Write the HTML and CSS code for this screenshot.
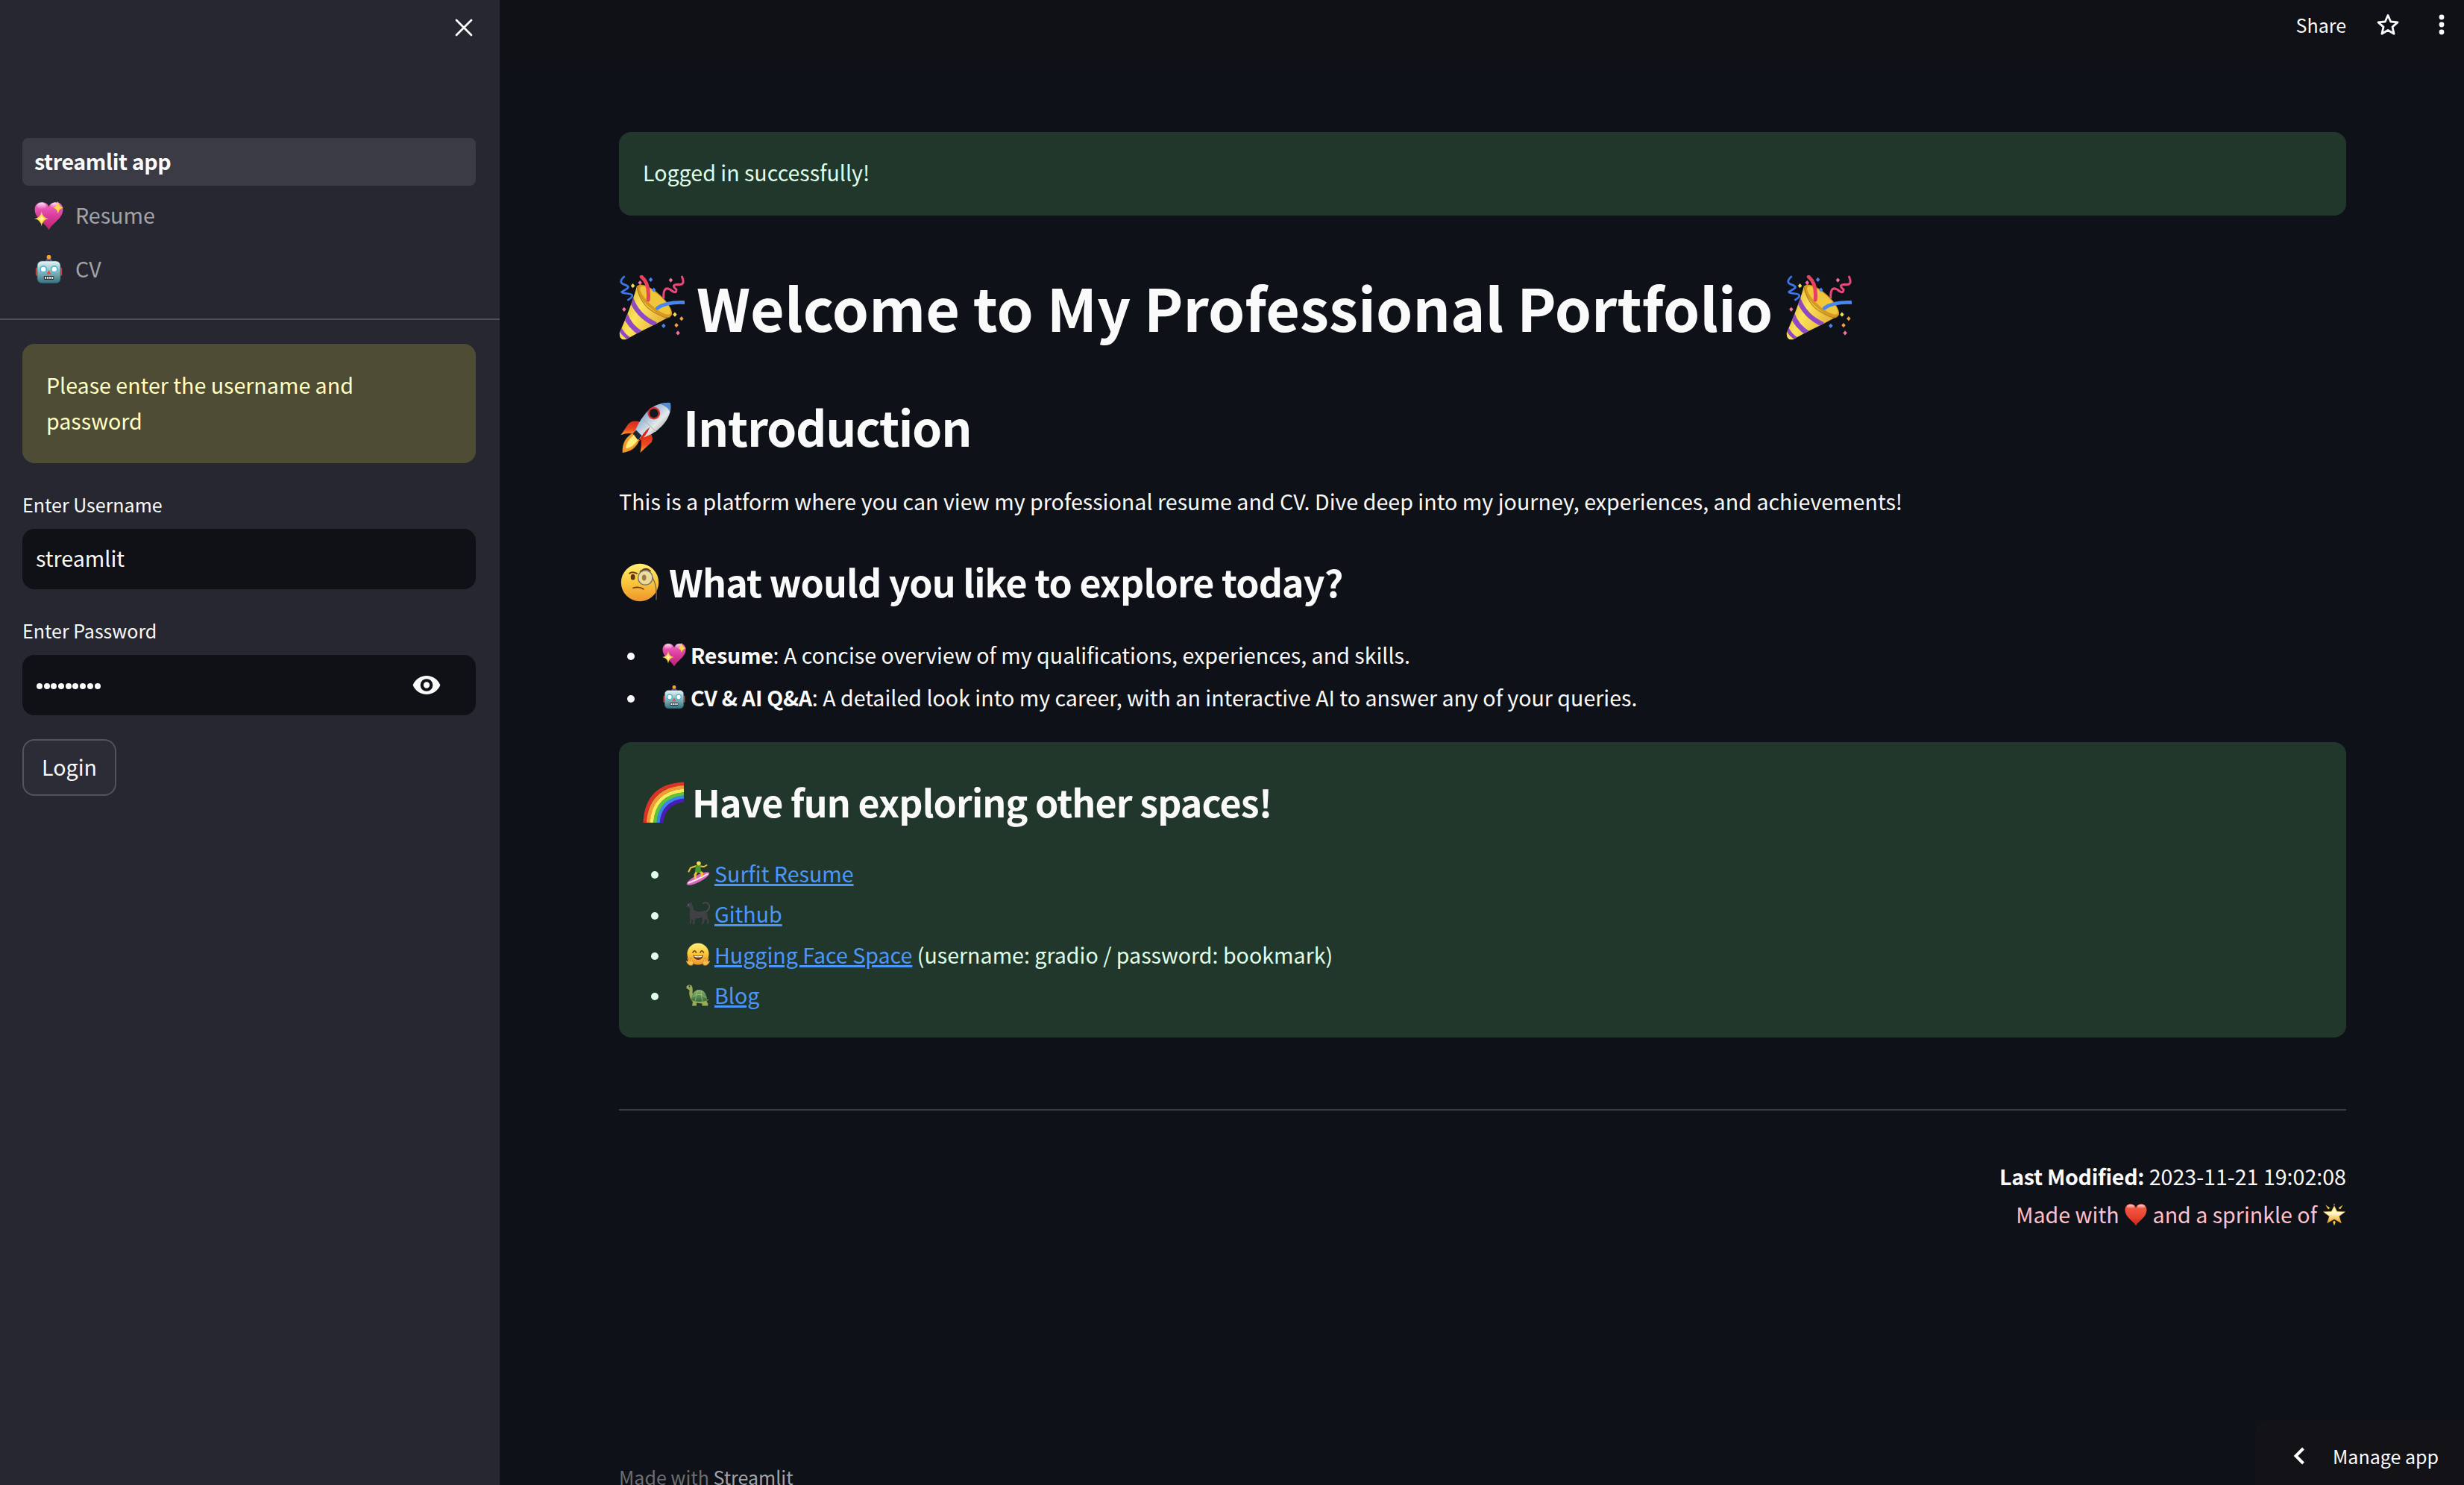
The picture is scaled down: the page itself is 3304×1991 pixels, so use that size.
FILE: index.html
```html
<!DOCTYPE html>
<html lang="en">
<head>
<meta charset="utf-8">
<title>streamlit app</title>
<link rel="stylesheet" href="styles.css">
</head>
<body>
<svg class="sprite" aria-hidden="true">
  <defs>
    <linearGradient id="pink" x1="0" y1="0" x2="0" y2="1"><stop offset="0" stop-color="#f06fc4"/><stop offset=".45" stop-color="#dc3fa0"/><stop offset="1" stop-color="#b8236c"/></linearGradient>
    <linearGradient id="shine" x1="0" y1="0" x2="0" y2="1"><stop offset="0" stop-color="#fff" stop-opacity=".75"/><stop offset="1" stop-color="#fff" stop-opacity="0"/></linearGradient>
    <linearGradient id="teal" x1="0" y1="0" x2="0" y2="1"><stop offset="0" stop-color="#e6f7f6"/><stop offset=".45" stop-color="#8fbcc1"/><stop offset="1" stop-color="#33707f"/></linearGradient>
    <linearGradient id="gold" x1="0" y1="0" x2="1" y2=".5"><stop offset="0" stop-color="#c98f22"/><stop offset=".45" stop-color="#fce45a"/><stop offset="1" stop-color="#d99a2b"/></linearGradient>
    <linearGradient id="face" x1="0" y1="0" x2="0" y2="1"><stop offset="0" stop-color="#fff07a"/><stop offset=".45" stop-color="#fbcb3c"/><stop offset="1" stop-color="#ee942f"/></linearGradient>
    <linearGradient id="steel" x1="0" y1="0" x2="1" y2="1"><stop offset="0" stop-color="#4d7fc0"/><stop offset=".35" stop-color="#9db9d8"/><stop offset=".6" stop-color="#e6e9ea"/><stop offset="1" stop-color="#55595c"/></linearGradient>
    <linearGradient id="fin" x1="0" y1="0" x2="0" y2="1"><stop offset="0" stop-color="#d92817"/><stop offset=".6" stop-color="#ea4a22"/><stop offset="1" stop-color="#f6a62e"/></linearGradient>
    <linearGradient id="red" x1="0" y1="0" x2="0" y2="1"><stop offset="0" stop-color="#f4604a"/><stop offset=".6" stop-color="#e8432f"/><stop offset="1" stop-color="#c42315"/></linearGradient>
    <linearGradient id="star" x1="0" y1="0" x2="0" y2="1"><stop offset="0" stop-color="#ffe96a"/><stop offset=".4" stop-color="#fffbcf"/><stop offset="1" stop-color="#f0a020"/></linearGradient>
    <linearGradient id="shell" x1="0" y1="0" x2="0" y2="1"><stop offset="0" stop-color="#8fb46a"/><stop offset="1" stop-color="#2f6b3a"/></linearGradient>
    <clipPath id="cone"><path d="M17.6 10 C14 24 6 44 .6 56 Q0 64 7 62.500 C22 54 38 47 50 40 Z"/></clipPath>
  </defs>

  <symbol id="party" viewBox="0 0 64 64">
    <g clip-path="url(#cone)">
      <path d="M0 0H64V64H0Z" fill="url(#gold)"/>
      <path d="M12 23 Q18 40 36 48" fill="none" stroke="#8f49c4" stroke-width="4.500"/>
      <path d="M6 38 Q10 50 22 57" fill="none" stroke="#8f49c4" stroke-width="5"/>
      <path d="M1 52 Q4 58 10 62" fill="none" stroke="#8f49c4" stroke-width="3.500"/>
    </g>
    <ellipse cx="34.500" cy="25" rx="22" ry="8" transform="rotate(42 34.500 25)" fill="#d59a22"/>
    <ellipse cx="35.500" cy="24.500" rx="19.500" ry="6" transform="rotate(42 35.500 24.500)" fill="#f0c63a"/>
    <path d="M17.600 10.500 Q20 28 34 36 T50 40" fill="none" stroke="#b87b18" stroke-width=".8"/>
    <g fill="none" stroke-linecap="round">
      <path d="M5 1.500 Q-1 7 5 9 T8 13 T3 16 T9 18 T9 24" stroke="#3d76e8" stroke-width="2"/>
      <path d="M22 1.500 Q30 8 28.500 24" stroke="#e8415f" stroke-width="3.600"/>
      <path d="M61.500 1.500 Q65 10 58 9 Q50 9 56 14 Q56 19 50 14 Q43 10 43.500 22" stroke="#e6487a" stroke-width="2.200"/>
      <path d="M37.500 32 Q46 26 63 26.500" stroke="#4a86f0" stroke-width="3.600"/>
    </g>
    <g fill="#4a86f0"><path d="M31 2l2 2.300-2 2.300-2-2.300zM34 12l2 2.300-2 2.300-2-2.300zM43.500 47l2 2.300-2 2.300-2-2.300z"/></g>
    <g fill="#f7e04c"><path d="M13.500 8l2 2.300-2 2.300-2-2.300zM54.500 36l2 2.300-2 2.300-2-2.300z"/></g>
    <g fill="#f0729e"><path d="M20.500 5l2 2.300-2 2.300-2-2.300zM50.500 2.500l2 2.300-2 2.300-2-2.300zM5 31l2 2.300-2 2.300-2-2.300zM57.500 54l2 2.300-2 2.300-2-2.300z"/></g>
    <g fill="#f0a040"><path d="M61 40l2 2.300-2 2.300-2-2.300zM56 46.500l2 2.300-2 2.300-2-2.300z"/></g>
  </symbol>

  <symbol id="rocket" viewBox="0 0 64 64">
    <path d="M26 25 Q14 21 9 29 L1 41 Q11 37 20 41Z" fill="url(#fin)"/>
    <path d="M38 38 Q43 48 37 52 L25 63 Q27 53 26 46Z" fill="url(#fin)"/>
    <path d="M15 39 Q2 47 3 63 Q19 61 24 47Z" fill="#f29b2c"/>
    <path d="M17 41 Q7 49 7 58 Q17 56 22 47Z" fill="#ffee7a"/>
    <path d="M62.500 1 Q43 0 31 15 Q21 27 17 41 L22 46 Q41 42 52 30 Q65 16 62.500 1Z" fill="url(#steel)"/>
    <path d="M62.500 1 Q57 0 51 3 Q60 6 62 13 Q63 7 62.500 1Z" fill="#568dcc"/>
    <path d="M16 39 L20 35 L27 42 L22 47Z" fill="#202734"/>
    <circle cx="42" cy="14" r="7.800" fill="#d8322a"/><circle cx="42" cy="14" r="5.600" fill="#15191f"/>
    <path d="M37 31 Q29 37 23 49 Q32 44 37 31Z" fill="#d92a1c"/>
    <path d="M29 22 L45 37" stroke="#bca979" stroke-width=".8"/>
  </symbol>

  <symbol id="monocle" viewBox="0 0 64 64">
    <circle cx="32" cy="32" r="31" fill="url(#face)"/>
    <path d="M15 17 Q19 13 27 17" fill="none" stroke="#6b3a12" stroke-width="2.500" stroke-linecap="round"/>
    <path d="M33 14 Q42 6 49 13" fill="none" stroke="#6b3a12" stroke-width="2.500" stroke-linecap="round"/>
    <ellipse cx="20.500" cy="23" rx="3.600" ry="4.800" fill="#633410"/>
    <circle cx="41" cy="24" r="12" fill="#e9dfae" fill-opacity=".8" stroke="#6e7478" stroke-width="1.800"/>
    <ellipse cx="39" cy="24" rx="3.500" ry="4.800" fill="#9a7a4d"/>
    <path d="M53 24 Q61 38 59 61" fill="none" stroke="#70604c" stroke-width="1.600"/>
    <path d="M21 41 Q31 38 38 43" fill="none" stroke="#6b3a12" stroke-width="2" stroke-linecap="round"/>
  </symbol>

  <symbol id="sparkheart" viewBox="0 0 64 64">
    <path d="M32 63 C24 47 1 38 1 18 C1 -2 27 -3 32 12 C37 -3 63 -2 63 18 C63 38 40 47 32 63Z" fill="url(#pink)"/>
    <ellipse cx="16" cy="10" rx="10" ry="7" fill="url(#shine)"/><ellipse cx="45" cy="9" rx="9" ry="6" fill="url(#shine)"/>
    <path d="M16 22 Q18 36 31 38 Q18 40 16 55 Q14 40 0 38 Q14 36 16 22Z" fill="#fbd648"/>
    <path d="M16 30 Q17 37 24 38 Q17 39 16 47 Q15 39 8 38 Q15 37 16 30Z" fill="#fff3a0"/>
    <path d="M52 -1 Q54 12 64 14 Q54 16 52 27 Q50 16 42 14 Q50 12 52 -1Z" fill="#fbd648"/>
  </symbol>

  <symbol id="robot" viewBox="0 0 64 64">
    <rect x="3" y="27" width="7" height="19" rx="3" fill="#c8463c"/><rect x="54" y="27" width="7" height="19" rx="3" fill="#c8463c"/>
    <ellipse cx="32" cy="12" rx="7" ry="4" fill="#6b5596"/><path d="M30 6h4v7h-4z" fill="#55427c"/>
    <circle cx="32" cy="4.500" r="4.800" fill="#f5a52c"/>
    <rect x="6.500" y="13" width="51" height="49" rx="10" fill="url(#teal)" stroke="#255562" stroke-width="1"/>
    <circle cx="20" cy="31" r="8" fill="#4bb3dc"/><circle cx="20" cy="31" r="5.300" fill="#fff"/>
    <circle cx="44" cy="31" r="8" fill="#4bb3dc"/><circle cx="44" cy="31" r="5.300" fill="#fff"/>
    <path d="M32 33 L37 42 H27Z" fill="#e0523f"/>
    <rect x="21" y="46" width="22" height="8" rx="2" fill="#2a2f35"/>
    <path d="M23 48h3.500v4H23zM28 48h3.500v4H28zM33 48h3.500v4H33zM38 48h3.500v4H38z" fill="#fff"/>
  </symbol>

  <symbol id="rainbow" viewBox="0 0 64 64">
    <g fill="none" stroke-width="5.600">
      <path d="M3.300 64 Q6 6 64 3.300" stroke="#dc3328"/>
      <path d="M8.500 64 Q12 12 64 8.500" stroke="#f09a35"/>
      <path d="M13.800 64 Q17 18 64 13.800" stroke="#fbe95c"/>
      <path d="M19 64 Q22 23 64 19" stroke="#5cc63a"/>
      <path d="M24 64 Q27 28 64 24" stroke="#3b86ea"/>
      <path d="M29 64 Q32 33 64 29" stroke="#4a1bb8"/>
    </g>
  </symbol>

  <symbol id="surfer" viewBox="0 0 64 64">
    <ellipse cx="32" cy="46" rx="34" ry="9.500" transform="rotate(-27 32 46)" fill="#d765b8"/>
    <path d="M5 58 Q28 50 59 33" stroke="#f7e3f2" stroke-width="4" fill="none"/>
    <g fill="none" stroke="#f6c02f" stroke-linecap="round" stroke-linejoin="round">
      <path d="M27 12 L12 17 L7 27" stroke-width="4"/><path d="M38 13 L48 14 L55 10" stroke-width="4"/>
      <path d="M29 27 L24 36 L25 44" stroke-width="6"/><path d="M35 26 L43 31 L42 38" stroke-width="6"/>
    </g>
    <path d="M26 10 L39 10 L39 21 L41 28 L33 30 L24 28Z" fill="#4b9b31"/>
    <circle cx="34" cy="5.500" r="5.500" fill="#f8cf4a"/><path d="M28 4 Q33 -4 39 3 Q34 3 31 8Z" fill="#f4dc70"/>
  </symbol>

  <symbol id="cat" viewBox="0 0 64 64">
    <path d="M52 28 Q66 18 61 8 Q56 -1 46 4" fill="none" stroke="#4a4a50" stroke-width="3.600" stroke-linecap="round"/>
    <path d="M1 10 L4 6 L5 2 L9 5 L15 1 L16 8 Q20 13 20 22 Q33 30 49 24 Q58 27 57 38 L58 44 L62 49 L60 59 L55 60 L57 51 L51 45 L49 52 L46 60 L41 60 L44 51 L43 41 Q36 46 27 44 L23 52 L23 60 L17 60 L18 50 L15 45 L14 59 L9 59 L11 45 Q8 34 11 20 L8 15 L2 14Z" fill="#404046"/>
    <circle cx="7" cy="8.500" r="1.200" fill="#b2ad53"/>
  </symbol>

  <symbol id="hug" viewBox="0 0 64 64">
    <circle cx="32" cy="30" r="29" fill="url(#face)"/>
    <path d="M18 26 Q23 17 27 26 M38 26 Q42 17 47 26" fill="none" stroke="#6b3a12" stroke-width="3.200" stroke-linecap="round"/>
    <path d="M19 33 Q32 37 46 33 Q44 46 32 46 Q21 46 19 33Z" fill="#6b3a12"/><path d="M22 35 Q32 38 43 35 L42 38 Q32 40 23 38Z" fill="#fff"/>
    <path d="M3 40 L12 49 L11 40 Q16 39 17 47 Q22 55 17 60 Q9 63 4 56 L0 49 L6 50Z" fill="#f7bd4a" stroke="#c77722" stroke-width="1.200"/>
    <path d="M61 40 L52 49 L53 40 Q48 39 47 47 Q42 55 47 60 Q55 63 60 56 L64 49 L58 50Z" fill="#f7bd4a" stroke="#c77722" stroke-width="1.200"/>
  </symbol>

  <symbol id="turtle" viewBox="0 0 64 64">
    <path d="M1 9 Q5 3 14 6 Q19 12 17 26 L22 39 L50 47 L62 43 L55 49 L59 56 L58 61 L43 61 L43 55 L28 53 L28 61 L16 61 L18 51 Q6 38 9 19 L1 14Z" fill="#9aab55"/>
    <path d="M14 46 Q16 18 36 18 Q54 20 57 47 Q34 53 14 46Z" fill="url(#shell)"/>
    <path d="M17 38 L27 31 L40 31 L54 39 M27 31 L31 19 M40 31 L42 20 M27 31 L25 48 M40 31 L44 49" fill="none" stroke="#b0c988" stroke-width="1.400"/>
    <circle cx="9" cy="9" r="1.800" fill="#20271a"/>
  </symbol>

  <symbol id="heart" viewBox="0 0 64 64">
    <path d="M32 63 C26 50 1 38 1 18 C1 -4 27 -4 32 11 C37 -4 63 -4 63 18 C63 38 38 50 32 63Z" fill="url(#red)"/>
    <ellipse cx="17" cy="8" rx="11" ry="6" fill="url(#shine)"/><ellipse cx="47" cy="8" rx="11" ry="6" fill="url(#shine)"/>
  </symbol>

  <symbol id="glowstar" viewBox="0 0 64 64">
    <path d="M32 7 L40 23 L63 24 L46 37 L52 56 L32 45 L12 56 L18 37 L1 24 L24 23Z" fill="url(#star)" stroke="#f2b32c" stroke-width="1"/>
    <path d="M7 4 L20 13 L15 17Z M57 4 L44 13 L49 17Z M28 53 L32 49 L36 53 L32 64Z M32 0 L34 5 H30Z" fill="#f1c740"/>
  </symbol>
</svg>

<div class="app">
  <aside class="sidebar">
    <div class="sidebar-top">
      <svg class="close" viewBox="0 0 24 24"><path d="M2 2L22 22M22 2L2 22"/></svg>
    </div>
    <nav class="nav">
      <a class="nav-item active"><span>streamlit app</span></a>
      <a class="nav-item"><svg class="emoji"><use href="#sparkheart"/></svg><span>Resume</span></a>
      <a class="nav-item"><svg class="emoji"><use href="#robot"/></svg><span>CV</span></a>
    </nav>
    <div class="panel">
      <div class="warning">Please enter the username and<br>password</div>
      <label class="label">Enter Username</label>
      <div class="field"><span>streamlit</span></div>
      <label class="label">Enter Password</label>
      <div class="field">
        <span class="dots"><i></i><i></i><i></i><i></i><i></i><i></i><i></i><i></i><i></i></span>
        <svg class="eye" viewBox="1 4.500 22 15"><path fill-rule="evenodd" d="M12 4.500C7 4.500 2.730 7.610 1 12c1.730 4.390 6 7.500 11 7.500s9.270-3.110 11-7.500c-1.730-4.390-6-7.500-11-7.500zM12 17a5 5 0 1 1 0-10 5 5 0 0 1 0 10zm0-7.500a2.500 2.500 0 1 0 0 5 2.500 2.500 0 0 0 0-5z"/></svg>
      </div>
      <div class="button"><span>Login</span></div>
    </div>
  </aside>

  <div class="page">
    <header class="toolbar">
      <span class="share">Share</span>
      <svg class="star" viewBox="0 0 30 30"><path d="M15 2.500L18.700 11L28 11.900L21 18.100L23.100 27.300L15 22.500L6.900 27.300L9 18.100L2 11.900L11.300 11Z"/></svg>
      <svg class="kebab" viewBox="0 0 8 28"><circle cx="4" cy="4" r="3.400"/><circle cx="4" cy="14" r="3.400"/><circle cx="4" cy="24" r="3.400"/></svg>
    </header>
    <main class="content">
      <div class="success"><span>Logged in successfully!</span></div>
      <h1 class="row"><svg class="emoji"><use href="#party"/></svg><span>Welcome to My Professional Portfolio</span><svg class="emoji"><use href="#party"/></svg></h1>
      <h2 class="row"><svg class="emoji"><use href="#rocket"/></svg><span>Introduction</span></h2>
      <p class="intro"><span>This is a platform where you can view my professional resume and CV. Dive deep into my journey, experiences, and achievements!</span></p>
      <h3 class="row face"><svg class="emoji"><use href="#monocle"/></svg><span>What would you like to explore today?</span></h3>
      <ul class="list">
        <li><svg class="emoji"><use href="#sparkheart"/></svg><span><b>Resume</b>: A concise overview of my qualifications, experiences, and skills.</span></li>
        <li><svg class="emoji"><use href="#robot"/></svg><span><b>CV &amp; AI Q&amp;A</b>: A detailed look into my career, with an interactive AI to answer any of your queries.</span></li>
      </ul>
      <section class="spaces">
        <h3 class="row"><svg class="emoji"><use href="#rainbow"/></svg><span>Have fun exploring other spaces!</span></h3>
        <ul class="list links">
          <li><svg class="emoji"><use href="#surfer"/></svg><span><a>Surfit Resume</a></span></li>
          <li><svg class="emoji"><use href="#cat"/></svg><span><a>Github</a></span></li>
          <li><svg class="emoji"><use href="#hug"/></svg><span><a>Hugging Face Space</a> (username: gradio / password: bookmark)</span></li>
          <li><svg class="emoji turtle"><use href="#turtle"/></svg><span><a>Blog</a></span></li>
        </ul>
      </section>
      <hr class="rule">
      <div class="meta">
        <div class="meta-row"><span><b>Last Modified:</b> 2023-11-21 19:02:08</span></div>
        <div class="meta-row love"><span>Made with</span><svg class="emoji"><use href="#heart"/></svg><span>and a sprinkle of</span><svg class="emoji glow"><use href="#glowstar"/></svg></div>
      </div>
      <footer class="footer">Made with <a>Streamlit</a></footer>
    </main>
    <div class="manage">
      <svg class="chevron" viewBox="0 0 16 24"><path d="M13.500 2L3.500 12L13.500 22"/></svg>
      <span>Manage app</span>
    </div>
  </div>
</div>
</body>
</html>
```
FILE: styles.css
```css
* { box-sizing: border-box; }
body {
  margin: 0;
  background: #0e1117;
  color: #fafafa;
  font-family: "Noto Sans CJK JP", "Noto Sans", sans-serif;
  font-size: 28.6px;
  line-height: 48px;
  overflow: hidden;
}
h1, h2, h3, p, ul { margin: 0; padding: 0; }
span { white-space: nowrap; }
b { letter-spacing: -0.3px; }
svg { display: block; flex: none; }
.sprite { position: absolute; width: 0; height: 0; }
.emoji { width: 32px; height: 32px; overflow: visible; }
.app { display: flex; width: 3304px; height: 1991px; overflow: hidden; }

/* Sidebar */
.sidebar { width: 670px; flex: none; background: #262730; }
.sidebar-top { height: 185px; padding: 25px 36px 0 0; display: flex; justify-content: flex-end; }
.close { width: 24px; height: 24px; fill: none; stroke: #fafafa; stroke-width: 2.800; stroke-linecap: round; }
.nav { display: flex; flex-direction: column; gap: 8px; height: 244px; padding: 0 32px 0 30px; border-bottom: 2px solid #4d4e57; }
.nav-item { display: flex; align-items: center; height: 64px; padding: 0 16px; border-radius: 8px; color: #a3a3a7; }
.nav-item .emoji { width: 39px; height: 39px; margin-right: 16px; }
.nav-item span { margin-top: -2px; }
.nav-item.active { background: #3b3b45; color: #fafafa; font-weight: 700; letter-spacing: -0.38px; }
.panel { padding: 32px 32px 0 30px; }
.warning { height: 160px; padding: 31px 32px; border-radius: 16px; background: #4f4c35; color: #ffffc2; }
.label { display: block; margin-top: 34px; height: 42px; line-height: 42px; font-size: 25px; }
.field { display: flex; align-items: center; justify-content: space-between; height: 81px; margin-top: 12px; padding: 0 46px 0 18px; border-radius: 16px; background: #0f1116; }
.field span { margin-top: -3px; }
.field .dots { display: flex; gap: 1.700px; margin: 3px 0 0 1px; }
.dots i { width: 8px; height: 8px; border-radius: 50%; background: #fafafa; }
.eye { width: 40px; height: 25px; fill: #fafafa; }
.button { display: flex; align-items: center; justify-content: center; width: 126px; height: 76px; margin-top: 32px; border: 2px solid #52535b; border-radius: 16px; background: #2b2c36; }
.button span { margin-top: -3px; }

/* Main column */
.page { flex: 1; display: flex; flex-direction: column; position: relative; }
.toolbar { flex: none; display: flex; align-items: center; justify-content: flex-end; height: 92px; padding: 0 26px 26px 0; background: #0f1116; font-size: 25px; }
.share { margin-right: 41px; }
.star { width: 30px; height: 30px; fill: none; stroke: #fafafa; stroke-width: 2.800; stroke-linejoin: round; margin-right: 53px; }
.kebab { width: 8px; height: 28px; fill: #fafafa; }
.content { flex: none; padding: 85px 158px 0 160px; }
.success { height: 112px; padding: 30px 32px; border-radius: 16px; background: #22372b; color: #dffde9; }
.row { display: flex; align-items: center; font-weight: 700; }
h1.row { height: 100px; margin-top: 72px; font-size: 78.800px; line-height: 100px; }
h1 .emoji { width: 88px; height: 88px; margin-top: 3px; }
h1 span { margin: 0 18px 0 16px; }
h2.row { height: 90px; margin-top: 65px; font-size: 64.500px; line-height: 90px; letter-spacing: -1.3px; }
h2 .emoji { width: 72px; height: 69px; margin-top: 4px; }
h2 span { margin-left: 14px; }
.intro { margin-top: 32px; height: 48px; letter-spacing: 0.025px; }
h3.row { height: 70px; margin-top: 48px; font-size: 50.100px; line-height: 70px; letter-spacing: -0.88px; }
h3 .emoji { width: 55px; height: 55px; margin-top: 2px; }
.face .emoji { width: 52px; height: 52px; margin: 3px 13px 0 2px; }
.list { margin-top: 35px; list-style: none; }
.list li { display: flex; align-items: center; height: 57px; }
.list li::before { content: ""; width: 10px; height: 10px; margin: 5px 37px 0 11px; border-radius: 50%; background: currentColor; }
.list .emoji { margin-right: 6px; }
.spaces { height: 396px; margin-top: 32px; padding: 44px 32px 0; border-radius: 16px; background: #22372b; color: #dffde9; }
.spaces h3.row { margin-top: 0; color: #fafafa; }
.spaces h3 span { margin-left: 11px; }
.links { margin-top: 34.600px; }
.links li { height: 54.400px; }
.links a { color: #4b96fa; text-decoration: underline; text-decoration-thickness: 3px; text-underline-offset: 2px; }
.rule { height: 2px; margin: 96px 0 0; border: 0; background: #3a3d42; }
.meta { margin-top: 62px; }
.meta-row { display: flex; align-items: center; justify-content: flex-end; height: 51px; }
.love { color: #ffc0cb; }
.love .emoji { width: 30px; height: 30px; margin: 2px 8px 0 7px; }
.love .glow { width: 30px; height: 33px; margin: 2px 1px 0 8px; }
.footer { height: 42px; margin-top: 306px; font-size: 25px; line-height: 42px; color: #6c6d71; }
.footer a { color: #a3a4a8; }
.manage { position: absolute; right: 0; bottom: 0; display: flex; align-items: center; width: 279px; height: 87px; padding: 8px 0 0 50px; border-top-left-radius: 16px; background: #121217; font-size: 25px; }
.chevron { width: 16px; height: 24px; fill: none; stroke: #fff; stroke-width: 4; margin: 0 37px 0 0; }
```
